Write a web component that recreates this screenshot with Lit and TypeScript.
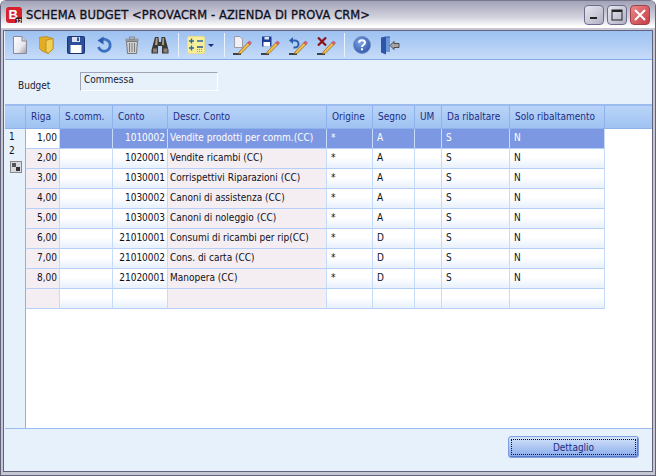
import { LitElement, html, css, svg } from "lit";
import { customElement } from "lit/decorators.js";

const ROWS = [
  ["1,00", "", "1010002", "Vendite prodotti per comm.(CC)", "*", "A", "", "S", "N"],
  ["2,00", "", "1020001", "Vendite ricambi (CC)", "*", "A", "", "S", "N"],
  ["3,00", "", "1030001", "Corrispettivi Riparazioni (CC)", "*", "A", "", "S", "N"],
  ["4,00", "", "1030002", "Canoni di assistenza (CC)", "*", "A", "", "S", "N"],
  ["5,00", "", "1030003", "Canoni di noleggio (CC)", "*", "A", "", "S", "N"],
  ["6,00", "", "21010001", "Consumi di ricambi per rip(CC)", "*", "D", "", "S", "N"],
  ["7,00", "", "21010002", "Cons. di carta (CC)", "*", "D", "", "S", "N"],
  ["8,00", "", "21020001", "Manopera (CC)", "*", "D", "", "S", "N"],
  ["", "", "", "", "", "", "", "", ""],
];
const HEAD = ["Riga", "S.comm.", "Conto", "Descr. Conto", "Origine", "Segno", "UM", "Da ribaltare", "Solo ribaltamento"];

const ic = (w: number, h: number, c: unknown) =>
  html`<svg width=${w} height=${h} viewBox="0 0 ${w} ${h}">${c}</svg>`;

const pencil = svg`
  <path d="M1 18H9" stroke="#111" stroke-width="1.3"/>
  <path d="M7 16 16 6.500l2 2L9 17.500l-2.500.5z" fill="#f4c04a" stroke="#8a5a12" stroke-width=".7"/>
  <path d="M15.800 6.700 17.500 5l2 2-1.700 1.700z" fill="#e8647a" stroke="#9c3040" stroke-width=".5"/>`;

const ICONS = {
  doc: svg`<defs><linearGradient id="d" x1="0" y1="0" x2="1" y2="1"><stop offset="0" stop-color="#fff"/><stop offset=".6" stop-color="#e8e8ee"/><stop offset="1" stop-color="#9a9aa8"/></linearGradient></defs>
    <path d="M2.500 .5H11L15.500 5V17.500H2.500z" fill="url(#d)" stroke="#8a8a98"/><path d="M11 .5V5h4.500" fill="#cfcfd8" stroke="#8a8a98"/>`,
  folder: svg`<path d="M0 1.500 7 .5 14 2.500V13L9 17.500 3 15 0 12z" fill="#e2ac24" stroke="#b08418" stroke-width=".7"/>
    <path d="M7 4.500 14 2.500V13L9 17.500 7 15z" fill="#f4cf58" stroke="#b08418" stroke-width=".7"/>`,
  save: svg`<rect x=".5" y=".5" width="17" height="17" rx="1" fill="#2c4f9c" stroke="#1c3272"/>
    <rect x="5" y="1" width="8" height="5" fill="#d8e0f0"/><rect x="10" y="1.500" width="2" height="3.500" fill="#2c4f9c"/>
    <rect x="3.500" y="9" width="11" height="8" fill="#fff"/>`,
  undo: svg`<path d="M5.500 4.500A6 6 0 1 1 3.500 11" fill="none" stroke="#3a70c0" stroke-width="2.800"/>
    <path d="M8.500 .5V8.500L2.500 4.500z" fill="#2c5eac"/>`,
  trash: svg`<rect x="2.500" y="3" width="13" height="2" rx="1" fill="#a8a8a8" stroke="#777" stroke-width=".5"/><rect x="6.500" y="1" width="5" height="2.500" fill="none" stroke="#888"/>
    <path d="M3.500 5.500H14.500L13.500 17.500H4.500z" fill="#d0d0d0" stroke="#777"/>
    <path d="M6.500 7V16M9 7V16M11.500 7V16" stroke="#7a7a7a"/>`,
  binoc: svg`<path d="M4 1H7.500L8 6H10L10.500 1H14L17.500 14V17.500H11V10H7V17.500H.5V14z" fill="#3c3834"/>
    <path d="M5 2H6.500V9H4zM11.500 2H13V9H11z" fill="#a89c90"/><rect x="2" y="12.500" width="4" height="4" fill="#8c8078"/><rect x="12.500" y="12.500" width="4" height="4" fill="#8c8078"/>`,
  calc: svg`<rect x=".5" y=".5" width="17" height="17" rx="1.500" fill="#f6ee9c" stroke="#e8dc88"/>
    <path d="M2 5H7M4.500 2.500V7.500M10 5H16M2 12H7M4.500 9.500V14.500" stroke="#2a6a9c" stroke-width="1.400"/>
    <path d="M10 11H16" stroke="#2a5a7c" stroke-width="1.400"/><path d="M10 13.500H16M10 15.500H16" stroke="#9a9a70" stroke-dasharray="1 1"/>`,
  pdoc: svg`<path d="M2.500 .5H8L10.500 3V11.500H2.500z" fill="#f0f0f4" stroke="#9a9aa8"/>${pencil}`,
  psave: svg`<rect x="2" y=".5" width="9.500" height="10" fill="#1c3c94"/><rect x="4.500" y="1" width="4.500" height="2.500" fill="#e0e4f0"/><rect x="3.500" y="6" width="6.500" height="4.500" fill="#fff"/>${pencil}`,
  pundo: svg`<path d="M4 4.500H7A3.500 3.500 0 0 1 7 11.500H5.500" fill="none" stroke="#2c5eac" stroke-width="2"/><path d="M5 1V8L1 4.500z" fill="#2c5eac"/>${pencil}`,
  pdel: svg`<path d="M2 1.500 10 9.500M10 1.500 2 9.500" stroke="#8c1018" stroke-width="2.200"/>${pencil}`,
  help: svg`<defs><radialGradient id="h" cx=".4" cy=".35" r=".75"><stop offset="0" stop-color="#7ea4e4"/><stop offset="1" stop-color="#2c50a4"/></radialGradient></defs>
    <circle cx="9" cy="9" r="8.500" fill="url(#h)" stroke="#6a88c4" stroke-width=".8"/>
    <path d="M6 6.800C6 3.400 12 3.400 12 6.800 12 8.800 9 8.800 9 11" fill="none" stroke="#fff" stroke-width="2"/><rect x="8" y="12.300" width="2" height="2" fill="#fff"/>`,
  door: svg`<path d="M1 1.500 6 .5H10V15.500H6V18.500L1 16.500z" fill="#2c56a8"/><path d="M6 1.500 10 1.500V15H6z" fill="#6c94d8"/>
    <path d="M10 9.500 14 5.500V7.500H19V11.500H14V13.500z" fill="#a4a4a4" stroke="#333" stroke-width=".8"/>`,
};

@customElement("app-root")
export class AppRoot extends LitElement {
  static styles = css`
    :host {
      display: block;
      width: 656px;
      height: 476px;
      font-family: "DejaVu Sans", Tahoma, sans-serif;
      font-stretch: condensed;
      font-size: 10px;
      --cols: 34px 53px 55px 159px 46px 42px 27px 68px 95px;
    }
    .win {
      box-sizing: border-box;
      width: 656px;
      height: 476px;
      display: flex;
      flex-direction: column;
      background: #e6f1fc;
      border: 1px solid #62627a;
      border-top-color: #77778e;
      border-radius: 6px 6px 0 0;
      overflow: hidden;
    }
    .title {
      height: 27px;
      flex: none;
      display: flex;
      align-items: center;
      padding: 1px 5px 0 5px;
      box-sizing: border-box;
      background: linear-gradient(#a2a2b8, #d2d2de 60%, #ffffff 95%);
    }
    .logo {
      width: 16px;
      height: 16px;
      flex: none;
    }
    .logo text {
      font-family: "Liberation Sans", sans-serif;
      font-weight: 700;
      font-stretch: normal;
    }
    .cap {
      flex: 1;
      margin-left: 4px;
      font-family: "DejaVu Sans", sans-serif;
      font-stretch: normal;
      font-size: 11.5px;
      font-weight: 500;
      letter-spacing: 0.1px;
      color: #10101c;
      white-space: nowrap;
      -webkit-text-stroke: 0.3px #10101c;
    }
    .wb {
      width: 20px;
      height: 20px;
      box-sizing: border-box;
      margin-left: 3px;
      border: 1px solid #6d6d8a;
      border-radius: 4px;
      background: linear-gradient(135deg, #e8e8f0, #b0b0c6);
      display: flex;
      align-items: center;
      justify-content: center;
    }
    .wb.x {
      background: linear-gradient(135deg, #e88a8a, #c63c44);
      border-color: #a04048;
    }
    .body {
      flex: 1;
      display: flex;
      flex-direction: column;
      border: solid #c6c6d4;
      border-width: 2px 2px 3px 2px;
      box-shadow: inset 0 0 0 1px #62627a;
      padding: 1px 1px 1px 2px;
      min-height: 0;
    }
    .tools {
      flex: none;
      height: 28px;
      display: flex;
      align-items: center;
      padding-left: 1px;
      background: linear-gradient(#9cc1f1, #c6dbf8);
      border-bottom: 1px solid #84a9e8;
    }
    .slot {
      width: 28px;
      height: 26px;
      display: flex;
      align-items: center;
      justify-content: center;
      flex: none;
    }
    .sep {
      width: 1px;
      height: 24px;
      margin: 0 3px 0 4px;
      background: #eaf2fd;
      flex: none;
    }
    .combo {
      width: 38px;
      height: 26px;
      display: flex;
      align-items: center;
      gap: 3px;
      padding-left: 5px;
      box-sizing: border-box;
      flex: none;
    }
    .arrow {
      width: 0;
      height: 0;
      border: 3px solid transparent;
      border-top: 3px solid #1c2c84;
      border-bottom: 0;
    }
    .form {
      flex: none;
      height: 44px;
      display: flex;
      align-items: flex-start;
      padding: 0 0 0 13px;
      color: #202030;
    }
    .lbl {
      width: 62px;
      padding-top: 20px;
    }
    .input {
      width: 138px;
      height: 19px;
      box-sizing: border-box;
      border: 1px solid #a0a4b4;
      border-right-color: #fff;
      border-bottom-color: #fff;
      padding: 1px 3px;
      margin-top: 12px;
      color: #202030;
    }
    .grid {
      flex: 1;
      min-height: 0;
      display: flex;
      flex-direction: column;
      background: #fff;
      border-top: 2px solid #9cbcf0;
      border-bottom: 1px solid #9cbcf0;
    }
    .hrow {
      flex: none;
      height: 22px;
      display: grid;
      grid-template-columns: 21px var(--cols) 1fr;
      background: linear-gradient(#b9d4f8, #9fc2f2);
      border-bottom: 1px solid #8eb2ec;
      color: #1c2c84;
    }
    .hrow div {
      border-right: 1px solid #8eb2ec;
      padding: 5px 0 0 5px;
      white-space: nowrap;
      overflow: hidden;
    }
    .hrow div:last-child {
      border-right: 0;
    }
    .gbody {
      flex: 1;
      display: flex;
      min-height: 0;
    }
    .gutter {
      width: 21px;
      flex: none;
      background: #e6f1fc;
      border-right: 1px solid #8eb2ec;
      font-size: 10px;
      line-height: 14px;
      padding: 1px 0 0 4px;
      margin-right: -4px;
      box-sizing: border-box;
      color: #101018;
    }
    .gutter svg {
      display: block;
      margin: 3px 0 0 1px;
    }
    .rows {
      display: grid;
      grid-template-columns: var(--cols);
      grid-auto-rows: 20px;
      align-content: start;
      margin-left: 4px;
    }
    .c {
      box-sizing: border-box;
      border-right: 1px solid #c6dbfa;
      border-bottom: 1px solid #b4cff8;
      padding: 3px 0 0 4px;
      background: linear-gradient(#fff 45%, #e8f0fc);
      color: #101018;
      white-space: nowrap;
      overflow: hidden;
    }
    .c.num {
      text-align: right;
      padding: 3px 2px 0 0;
    }
    .c.pink {
      background: #f4eef3;
      padding-left: 2px;
    }
    .c.pink.num {
      padding-left: 0;
    }
    .c.sel {
      background: #7d98e2;
      color: #fff;
    }
    .c.act {
      background: #fff;
      color: #101018;
    }
    .foot {
      flex: none;
      height: 42px;
      display: flex;
      justify-content: flex-end;
      align-items: flex-start;
      padding: 7px 13px 0 0;
      box-sizing: border-box;
    }
    .btn {
      width: 131px;
      height: 22px;
      box-sizing: border-box;
      border: 1px solid #7f9ee0;
      border-radius: 3px;
      background: linear-gradient(#d4e3fa, #88aaea);
      box-shadow: inset -1px -1px 0 #5c7cc8;
      color: #1c2c84;
      font: inherit;
      padding: 0;
      position: relative;
    }
    .btn::after {
      content: "";
      position: absolute;
      inset: 2px;
      border: 1px dotted #101018;
    }
  `;

  private renderRow(r: string[], i: number) {
    return r.map((v, j) => {
      const cls = ["c"];
      if (j === 0 || j === 2) cls.push("num");
      if (j === 0 || j === 3) cls.push("pink");
      if (i === 0) cls.push(j === 0 ? "act" : "sel");
      return html`<div class=${cls.join(" ")}>${v}</div>`;
    });
  }

  render() {
    const slot = (c: unknown, w = 18, h = 18) => html`<div class="slot">${ic(w, h, c)}</div>`;
    return html`<div class="win">
      <div class="title">
        <svg class="logo" viewBox="0 0 16 16">
          <rect width="16" height="16" rx="3" fill="#d8202c" />
          <text x="2.500" y="12" font-size="13" fill="#fff">B</text>
          <rect x="9.500" y="10.500" width="6.500" height="5.500" fill="#401414" />
          <text x="10" y="15.500" font-size="5" fill="#fff">12</text>
        </svg>
        <div class="cap">SCHEMA BUDGET &lt;PROVACRM - AZIENDA DI PROVA CRM&gt;</div>
        <div class="wb"><svg width="10" height="10"><rect x="1" y="7" width="7" height="2" fill="#222" /></svg></div>
        <div class="wb"><svg width="12" height="12"><rect x="1" y="1" width="10" height="10" fill="none" stroke="#222" /><rect x="1" y="1" width="10" height="2" fill="#222" /></svg></div>
        <div class="wb x"><svg width="12" height="12"><path d="M1 1 11 11M11 1 1 11" stroke="#fff" stroke-width="2" /></svg></div>
      </div>
      <div class="body">
        <div class="tools">
          ${slot(ICONS.doc)}${slot(ICONS.folder)}${slot(ICONS.save)}${slot(ICONS.undo)}${slot(ICONS.trash)}${slot(ICONS.binoc)}
          <div class="sep"></div>
          <div class="combo">${ic(18, 18, ICONS.calc)}<div class="arrow"></div></div>
          <div class="sep"></div>
          ${slot(ICONS.pdoc, 20, 19)}${slot(ICONS.psave, 20, 19)}${slot(ICONS.pundo, 20, 19)}${slot(ICONS.pdel, 20, 19)}
          <div class="sep"></div>
          ${slot(ICONS.help)}${slot(ICONS.door, 20, 19)}
        </div>
        <div class="form">
          <div class="lbl">Budget</div>
          <div class="input">Commessa</div>
        </div>
        <div class="grid">
          <div class="hrow">
            <div></div>
            ${HEAD.map((h) => html`<div>${h}</div>`)}
            <div></div>
          </div>
          <div class="gbody">
            <div class="gutter">
              1<br />2
              <svg width="12" height="12" viewBox="0 0 12 12">
                <rect x=".5" y=".5" width="11" height="11" fill="#d8d8e0" stroke="#888" />
                <rect x="2" y="2" width="4" height="4" fill="#555" />
                <rect x="6" y="6" width="4" height="4" fill="#333" />
              </svg>
            </div>
            <div class="rows">${ROWS.map((r, i) => this.renderRow(r, i))}</div>
          </div>
        </div>
        <div class="foot"><button class="btn">Dettaglio</button></div>
      </div>
    </div>`;
  }
}
